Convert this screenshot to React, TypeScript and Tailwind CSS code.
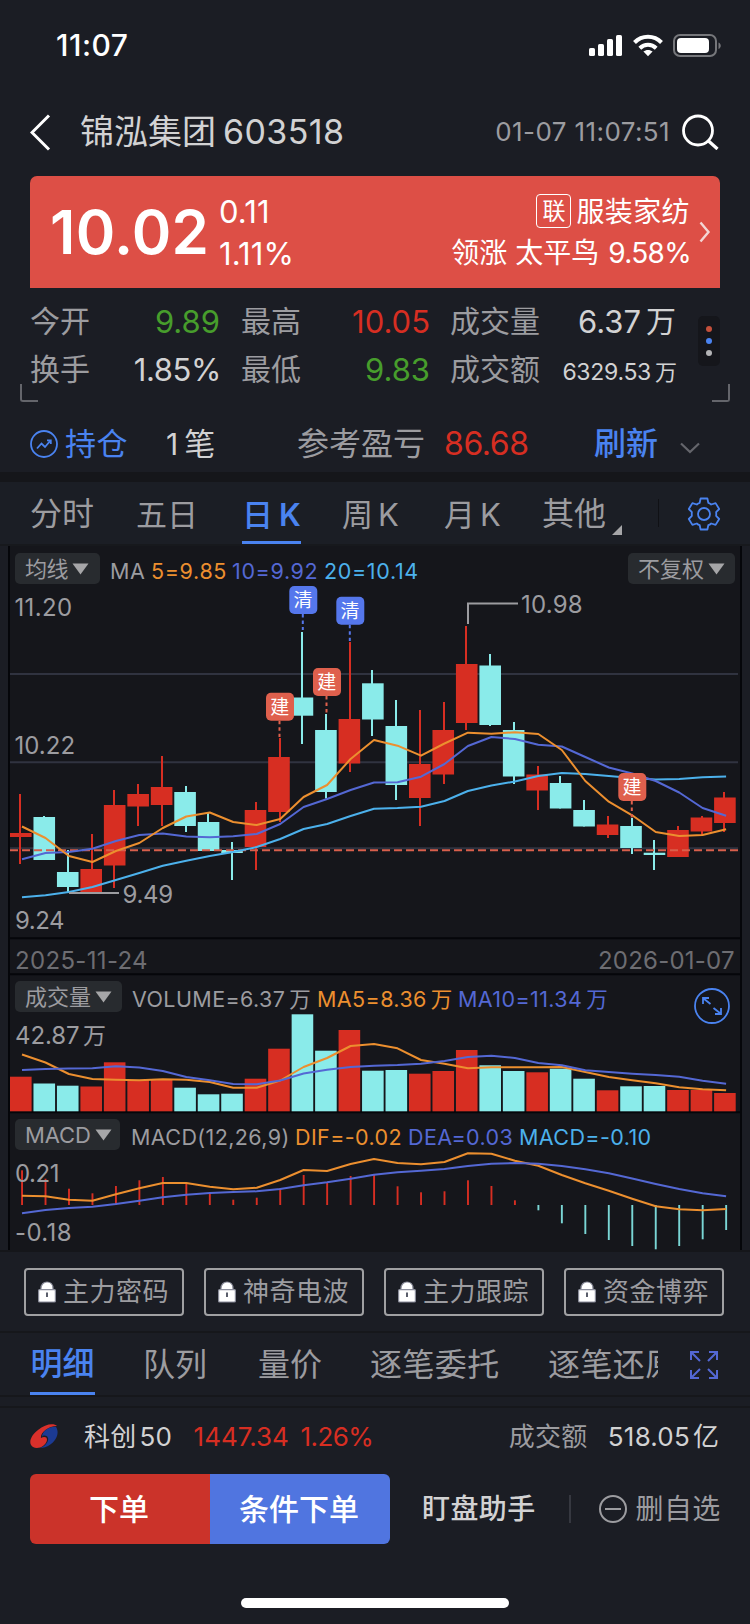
import React from 'react';

const RED = '#d72e22';
const CYAN = '#8aebea';
const ORANGE = '#ec8f2f';
const INDIGO = '#5468d4';
const SKY = '#4cb1ec';

// [up, high, bodyTop, bodyBottom, low]
const candles: [number, number, number, number, number][] = [
    [1, 794, 833, 837, 864],
    [0, 816, 817, 860, 860],
    [0, 850, 872, 887, 892],
    [1, 834, 869, 892, 892],
    [1, 790, 805, 865.5, 888],
    [1, 784, 794, 806.5, 826],
    [1, 756, 787, 805, 826],
    [0, 786, 792, 826, 832],
    [0, 813, 822, 851, 851],
    [0, 842, 850, 853, 880],
    [1, 802, 810, 847, 870],
    [1, 738, 757, 812, 822],
    [0, 632, 697.5, 715.7, 744],
    [0, 714, 730, 792, 798.5],
    [1, 642, 719, 763.5, 772],
    [0, 670, 683.3, 719.5, 736],
    [0, 700, 726, 785, 800],
    [1, 710, 764, 798, 826],
    [1, 702, 730, 774.5, 784],
    [1, 626, 664, 723, 730],
    [0, 654, 665.5, 725, 726],
    [0, 722, 730, 776.5, 784],
    [1, 766, 774.5, 790.5, 810],
    [0, 776, 783, 808.5, 808.5],
    [0, 800, 810, 826.5, 826.5],
    [1, 816, 824.5, 835, 838],
    [0, 818, 826, 848, 854],
    [0, 840, 852.7, 855, 870],
    [1, 826, 830, 857, 857],
    [1, 816, 817.5, 831.5, 836],
    [1, 792, 797.5, 823, 832],
];

const ma5 = [826.5, 838, 856, 862, 851, 843, 828, 816.5, 812.5, 822, 825, 819, 797, 785, 759, 740, 745.7, 755.7, 743.5, 732.7, 733.7, 732.3, 734, 750, 781, 801.7, 815.3, 832, 836, 835, 829.3];
const ma10 = [859.3, 853, 852, 848.7, 841, 835, 833.5, 836.5, 837.3, 836.3, 834, 824, 807, 799, 790, 782.5, 782.3, 776.7, 764, 746, 737, 739, 744.7, 746.5, 757, 767.5, 773.5, 781, 792.5, 808, 815.7];
const ma20 = [897.3, 895.3, 892, 887, 880, 873, 865.7, 860.7, 856, 852, 847, 839, 829, 824, 816, 808.7, 808, 806.7, 801, 791, 785.5, 781.5, 776, 773, 774, 776, 778, 779.5, 779, 777.3, 776.5];

const volTop = [1076.7, 1083.5, 1085.7, 1086.5, 1062.3, 1080, 1079, 1087.7, 1094.3, 1093.7, 1078.7, 1048.7, 1014.3, 1050.7, 1030, 1070.7, 1070, 1073.7, 1071, 1050, 1065.3, 1071, 1072.3, 1068.7, 1078.7, 1090.3, 1086.3, 1086, 1090, 1090, 1093];
const volMa5 = [1054.5, 1062.5, 1074, 1079, 1079.7, 1080.3, 1079.3, 1079.7, 1082, 1087.7, 1087.7, 1080.5, 1067, 1058, 1046, 1044, 1048.3, 1060, 1063.7, 1068.3, 1067.3, 1067.3, 1067.3, 1067, 1072, 1077, 1080.3, 1083.3, 1087.3, 1089.3, 1090.3];
const volMa10 = [1070, 1069, 1068.5, 1068.3, 1066.3, 1067.5, 1071, 1077, 1080.3, 1084, 1084.3, 1080.5, 1073.5, 1069.7, 1067, 1065.7, 1065, 1063.7, 1061, 1057, 1055.7, 1058, 1063, 1065.3, 1070.3, 1072, 1073.7, 1075, 1076.7, 1080.7, 1083.7];

const macdTip = [1170.3, 1178.7, 1188.7, 1193.3, 1186, 1180.3, 1177, 1183.7, 1193.7, 1199.7, 1197.7, 1188, 1175, 1182.7, 1176, 1175, 1186.3, 1192.3, 1191.3, 1180.3, 1186, 1200.3, 1210.3, 1223.3, 1234, 1240, 1246, 1249.3, 1246, 1239.3, 1230];
const dif = [1195.7, 1196.3, 1199.7, 1200.7, 1194.3, 1188.3, 1183, 1183, 1186.7, 1189.3, 1187.7, 1180, 1170, 1171, 1164, 1159, 1163, 1164.3, 1162, 1153.3, 1153.7, 1160.7, 1165.7, 1175, 1183.3, 1190.7, 1198.7, 1206.3, 1209.3, 1210.3, 1209];
const dea = [1213.3, 1210, 1208, 1206.7, 1204, 1200.7, 1197.3, 1194.7, 1193, 1192, 1191.3, 1189, 1185.3, 1182.3, 1178.7, 1174.7, 1172.3, 1170.7, 1169, 1166, 1163.7, 1163, 1163.7, 1166, 1169.3, 1173.3, 1178.5, 1184, 1189, 1193.3, 1196.3];

const px = (i: number) => 22 + i * 23.47;
const wickX = (i: number) => 2 * Math.floor((21.9 + i * 23.47) / 2);
const barX = (i: number) => 10 + i * 23.47;
const toPoints = (ys: number[]) => ys.map((y, i) => `${px(i).toFixed(1)},${y}`).join(' ');

const Line = ({ ys, color }: { ys: number[]; color: string }) => (
    <polyline points={toPoints(ys)} fill="none" stroke={color} strokeWidth="2" strokeLinejoin="round" />
);

const Label = ({ x, y, w, fill = '#9c9ca0', children }: { x: number; y: number; w: number; fill?: string; children: React.ReactNode }) => (
    <text x={x} y={y} textLength={w} fill={fill} fontSize="24">{children}</text>
);

const markers = [
    { x: 303.3, y: 600, end: 630, text: '清', color: '#5577ec' },
    { x: 350.3, y: 610.7, end: 641, text: '清', color: '#5577ec' },
    { x: 327, y: 682, end: 713, text: '建', color: '#df604d' },
    { x: 280, y: 706.7, end: 737, text: '建', color: '#df604d' },
    { x: 632.3, y: 787, end: 818, text: '建', color: '#df604d' },
];

const Chart = () => (
    <svg className="absolute inset-0" width="750" height="706" viewBox="0 546 750 706">
        {/* frame */}
        <rect x="10" y="546" width="730" height="704" fill="#15161b" />
        <path d="M9 546V1250M741 546V1250" stroke="#05060a" strokeWidth="2" />
        <path d="M10 938.3H740M10 974.3H740M10 1112.3H740" stroke="#05060a" strokeWidth="2" />
        <path d="M10 674H738M10 762.3H738M10 848.3H738" stroke="#303340" strokeWidth="2" />
        <path d="M0 1251H750" stroke="#15161a" strokeWidth="2" />

        {/* candles */}
        {candles.map(([up, high, top, bottom, low], i) => (
            <g key={i} fill={up ? RED : CYAN}>
                <rect x={wickX(i) - 1} y={high} width="2" height={low - high} />
                <rect x={barX(i)} y={top} width="21.6" height={bottom - top} />
            </g>
        ))}
        <path d="M10 850.2H738" stroke="#d85f4c" strokeWidth="2" strokeDasharray="8 4" />
        <Line ys={ma20} color={SKY} />
        <Line ys={ma10} color={INDIGO} />
        <Line ys={ma5} color={ORANGE} />

        <path d="M468 624V603.5H518M69 893H119" fill="none" stroke="#9c9ca0" strokeWidth="2" />
        <Label x={14.5} y={616} w={58}>11.20</Label>
        <Label x={14.5} y={754} w={61}>10.22</Label>
        <Label x={15} y={929} w={50}>9.24</Label>
        <Label x={122.5} y={903} w={51}>9.49</Label>
        <Label x={521} y={613} w={62}>10.98</Label>
        <Label x={15} y={969} w={133}>{<tspan fill="#6d6d72">2025-11-24</tspan>}</Label>
        <Label x={598} y={969} w={137} fill="#6d6d72">2026-01-07</Label>

        {markers.map((m, i) => (
            <g key={i}>
                <path d={`M${m.x - 0.5} ${m.y + 14}V${m.end}`} stroke={m.color} strokeWidth="2" strokeDasharray="3.5 3" />
                <rect x={m.x - 14} y={m.y - 14} width="28" height="28" rx="5" fill={m.color} />
                <text x={m.x} y={m.y + 7} textAnchor="middle" fontSize="19" fill="#fff">{m.text}</text>
            </g>
        ))}

        {/* volume */}
        {volTop.map((y, i) => (
            <rect key={i} x={barX(i)} y={y} width="21.6" height={1111.3 - y} fill={candles[i][0] ? RED : CYAN} />
        ))}
        <Line ys={volMa5} color={ORANGE} />
        <Line ys={volMa10} color={INDIGO} />
        <Label x={15} y={1043.5} w={65}>42.87</Label>
        <text x="83" y="1044" fontSize="23" fill="#9c9ca0">万</text>

        {/* macd */}
        {macdTip.map((y, i) => (
            <rect key={i} x={px(i) - 0.9} y={Math.min(y, 1205)} width="1.9" height={Math.abs(y - 1205)} fill={y < 1205 ? RED : '#7ad6d5'} />
        ))}
        <Line ys={dif} color={ORANGE} />
        <Line ys={dea} color={INDIGO} />
        <Label x={15} y={1181.5} w={45}>0.21</Label>
        <Label x={15} y={1241} w={57}>-0.18</Label>
    </svg>
);

const Pill = ({ children, className }: { children: React.ReactNode; className: string }) => (
    <div className={`h-[31px] rounded-[5px] bg-[#282b2f] flex items-center pl-[10px] gap-[4px] text-[22px] text-[#9c9ca0] shrink-0 ${className}`}>
        <span>{children}</span>
        <svg width="17" height="12" viewBox="0 0 17 12"><path d="M0.5 0.5H16.5L8.5 11.5Z" fill="#a6a6a8" /></svg>
    </div>
);

const Lock = () => (
    <svg width="18" height="22" viewBox="0 0 18 22" className="shrink-0">
        <path d="M3 9V7.5C3 3.5 5.5 1 9 1S15 3.5 15 7.5V9Z" fill="#fff" stroke="#8b8d9b" strokeWidth="1.2" />
        <rect x="0.6" y="8.6" width="16.8" height="12.4" rx="1" fill="#fff" stroke="#8b8d9b" strokeWidth="1.2" />
        <path d="M9 11.5V16" stroke="#5b5e6b" strokeWidth="2" />
    </svg>
);

const App: React.FC = () => {
    return (
        <div className="w-[750px] h-[1624px] bg-[#1b1d24] flex flex-col overflow-hidden whitespace-nowrap text-[#9c9ca0] leading-none font-['Inter','Noto_Sans_CJK_SC',sans-serif]">
            {/* status bar */}
            <div className="h-[92px] flex items-center justify-between pl-[56px] pr-[28px] text-white">
                <span className="-mt-[2px] text-[30px] font-medium tracking-[0.5px]">11:07</span>
                <svg width="134" height="24" viewBox="0 0 134 24" fill="#fff">
                    <rect x="1" y="14" width="6" height="8" rx="1.6" />
                    <rect x="10" y="10" width="6" height="12" rx="1.6" />
                    <rect x="19" y="5" width="6" height="17" rx="1.6" />
                    <rect x="28" y="1" width="6" height="21" rx="1.6" />
                    <g fill="none" stroke="#fff" strokeWidth="4">
                        <path d="M46.5 8.5C54 0.8 66 0.8 73.5 8.5" />
                        <path d="M51.8 14.2C56.5 9.6 63.5 9.6 68.2 14.2" />
                    </g>
                    <path d="M60 22.3L55.4 17.6C58 15.3 62 15.3 64.6 17.6Z" />
                    <rect x="86" y="1" width="42" height="21" rx="6" fill="none" stroke="#76777b" strokeWidth="2" />
                    <rect x="89" y="4" width="32" height="15" rx="4" />
                    <path d="M130.5 8.5C133.5 9.8 133.5 13.7 130.5 15Z" fill="#76777b" />
                </svg>
            </div>

            {/* title */}
            <div className="h-[84px] pb-[4px] flex items-center pl-[30px] pr-[31px] text-[#d2d2d3]">
                <svg width="21" height="37" viewBox="0 0 21 37" className="shrink-0"><path d="M19 1.5L2 18.5L19 35.5" fill="none" stroke="#fff" strokeWidth="3" /></svg>
                <span className="ml-[29px] text-[34px]">锦泓集团</span>
                <span className="ml-[7px] text-[34px] tracking-[0.4px]">603518</span>
                <span className="ml-auto text-[26px] text-[#9c9ca0] tracking-[0.4px]">01-07 11:07:51</span>
                <svg width="38" height="36" viewBox="0 0 38 36" className="ml-[11px] shrink-0">
                    <circle cx="17" cy="16.5" r="14.5" fill="none" stroke="#fff" strokeWidth="2.8" />
                    <path d="M27 26.5L36.5 35" stroke="#fff" strokeWidth="3.2" />
                </svg>
            </div>

            {/* price card */}
            <div className="h-[112px] mx-[30px] rounded-t-[7px] bg-[#dd4f46] text-white flex items-center">
                <span className="w-[189px] pl-[20px] text-[60px] font-semibold tracking-[0.3px]">10.02</span>
                <div className="flex flex-col h-[84px] text-[31px] tracking-[0.1px]">
                    <span className="h-[42px] flex items-center">0.11</span>
                    <span className="h-[42px] flex items-center">1.11%</span>
                </div>
                <div className="ml-auto pt-[2px] flex flex-col h-[84px] items-end text-[28px]">
                    <div className="h-[41px] flex items-center">
                        <span className="w-[35px] h-[34px] mb-[2px] border rounded-[4px] flex items-center justify-center text-[23px] mr-[5px]">联</span>
                        <span className="tracking-[0.4px]">服装家纺</span>
                    </div>
                    <div className="h-[42px] flex items-center">
                        <span>领涨</span>
                        <span className="ml-[8px]">太平鸟</span>
                        <span className="ml-[9px] -mr-[1px] tracking-[-0.7px]">9.58%</span>
                    </div>
                </div>
                <svg width="12" height="22" viewBox="0 0 12 22" className="ml-[9px] mr-[9px] shrink-0"><path d="M1.5 1.5L9.5 11L1.5 20.5" fill="none" stroke="#f3d6d4" strokeWidth="2.4" /></svg>
            </div>

            {/* quote stats */}
            <div className="h-[114px] pt-[9px] px-[20px] flex flex-col relative text-[30px]">
                <div className="h-[48px] pl-[10px] flex items-center">
                    <span className="w-[60px]">今开</span>
                    <span className="w-[130px] text-right text-[31px] text-[#479d2c]">9.89</span>
                    <span className="w-[60px] ml-[21px]">最高</span>
                    <span className="w-[129px] text-right text-[31px] text-[#d72e22]">10.05</span>
                    <span className="w-[90px] ml-[20px]">成交量</span>
                    <span className="w-[136px] flex items-center justify-end gap-[5px] text-[#d2d2d3]"><span className="text-[31px]">6.37</span><span>万</span></span>
                </div>
                <div className="h-[48px] pl-[10px] flex items-center">
                    <span className="w-[60px]">换手</span>
                    <span className="w-[131px] text-right text-[#d2d2d3] text-[31px] tracking-[-0.4px]">1.85%</span>
                    <span className="w-[60px] ml-[20px]">最低</span>
                    <span className="w-[129px] text-right text-[31px] text-[#479d2c]">9.83</span>
                    <span className="w-[90px] ml-[20px]">成交额</span>
                    <span className="w-[137px] pt-[6px] flex items-center justify-end gap-[4px] text-[#d2d2d3]"><span className="text-[23px] tracking-[-0.3px]">6329.53</span><span className="text-[22px]">万</span></span>
                </div>
                <svg width="22" height="50" viewBox="0 0 22 50" className="absolute left-[698px] top-[28px]">
                    <rect width="22" height="50" rx="5" fill="#15161b" />
                    <circle cx="11" cy="13" r="3" fill="#c4503b" />
                    <circle cx="11" cy="25" r="3" fill="#4a83f0" />
                    <circle cx="11" cy="37" r="3" fill="#b4b4b6" />
                </svg>
                <div className="absolute left-[20px] bottom-0 w-[18px] h-[18px] border-l-2 border-b-2 rounded-bl-[3px] border-[#64656b]" />
                <div className="absolute right-[20px] bottom-0 w-[18px] h-[18px] border-r-2 border-b-2 rounded-br-[3px] border-[#64656b]" />
            </div>

            {/* position */}
            <div className="h-[70px] pl-[30px] pb-[1px] pt-[14px] flex items-center text-[31px]">
                <svg width="28" height="28" viewBox="0 0 28 28" fill="none" stroke="#4a83f0" strokeWidth="1.8" className="shrink-0">
                    <circle cx="14" cy="14" r="13" />
                    <path d="M7 18.5L11.5 13.5L15 17L20.5 10.5M17 10.3H20.8V14" />
                </svg>
                <span className="ml-[7px] w-[101px] text-[#4a83f0] tracking-[0.6px]">持仓</span>
                <span className="w-[131px] flex items-center gap-[6px] text-[#d2d2d3]"><span className="text-[30px]">1</span><span>笔</span></span>
                <span className="w-[147px] text-[32px]">参考盈亏</span>
                <span className="w-[150px] text-[#d72e22] text-[32px] tracking-[-0.4px]">86.68</span>
                <span className="w-[86px] text-[32px] text-[#4a83f0] font-medium">刷新</span>
                <svg width="20" height="12" viewBox="0 0 20 12" className="mt-[8px]"><path d="M1 1.5L10 10L19 1.5" fill="none" stroke="#64656b" strokeWidth="2.2" /></svg>
            </div>
            <div className="h-[10px] bg-[#15161a]" />

            {/* period tabs */}
            <div className="h-[64px] pl-[30px] flex items-center text-[32px] bg-[#1b1e25] border-b-2 border-[#17191d]">
                <span className="w-[106px] pt-[2px]">分时</span>
                <span className="w-[106px] pt-[2px] text-[31px]">五日</span>
                <div className="w-[59px] h-full pt-[5px] flex items-center justify-center gap-[6px] border-b-[3px] border-[#4a83f0] text-[#4a83f0] text-[31px] font-medium"><span>日</span><span className="font-semibold">K</span></div>
                <div className="w-[102px] ml-[41px] pt-[2px] flex items-center gap-[5px] text-[31px]"><span>周</span><span>K</span></div>
                <div className="w-[98px] pt-[2px] flex items-center gap-[5px] text-[31px]"><span>月</span><span>K</span></div>
                <span className="w-[69px] pt-[2px]">其他</span>
                <svg width="10" height="10" viewBox="0 0 10 10" className="mt-[34px] ml-px"><path d="M10 0V10H0Z" fill="#a6a6a8" /></svg>
                <div className="w-px h-[28px] ml-[36px] bg-[#101115]" />
                <svg width="34" height="34" viewBox="0 0 34 34" fill="none" stroke="#4a83f0" strokeWidth="1.8" strokeLinejoin="round" className="ml-[28px] mt-[2px]">
                    <circle cx="17" cy="17" r="6" />
                    <path d="M13.6 1.5H20.4L21.3 5.8Q22.8 6.3 24.2 7.5L28.6 6.1L32.2 12L29.1 15.2Q29.4 17 29.1 18.8L32.2 22L28.6 27.9L24.2 26.5Q22.8 27.7 21.3 28.2L20.4 32.5H13.6L12.7 28.2Q11.2 27.7 9.8 26.5L5.4 27.9L1.8 22L4.9 18.8Q4.6 17 4.9 15.2L1.8 12L5.4 6.1L9.8 7.5Q11.2 6.3 12.7 5.8Z" />
                </svg>
            </div>

            {/* charts, with their indicator bars laid over */}
            <div className="h-[706px] relative flex flex-col text-[21.5px] tracking-[0.4px]">
                <Chart />
                <div className="relative mt-[7px] h-[31px] px-[15px] flex items-center">
                    <Pill className="w-[85px] tracking-[-0.4px]">均线</Pill>
                    <div className="flex pt-[7px] pl-[10px] tracking-[0.65px]">
                        <span className="w-[41px]">MA</span>
                        <span className="w-[81px] text-[#ec8f2f]">5=9.85</span>
                        <span className="w-[92px] text-[#5468d4]">10=9.92</span>
                        <span className="text-[#4cb1ec]">20=10.14</span>
                    </div>
                    <Pill className="w-[107px] ml-auto tracking-[0px]">不复权</Pill>
                </div>
                <div className="relative mt-[397px] h-[31px] px-[15px] flex items-center">
                    <Pill className="w-[107px] tracking-[0px]">成交量</Pill>
                    <div className="flex pt-[6px] pl-[10px]">
                        <span className="w-[185px] flex items-center gap-[4px]"><span>VOLUME=6.37</span><span>万</span></span>
                        <span className="w-[141px] flex items-center gap-[4px] text-[#ec8f2f]"><span>MA5=8.36</span><span>万</span></span>
                        <span className="flex items-center gap-[4px] text-[#5468d4]"><span>MA10=11.34</span><span>万</span></span>
                    </div>
                    <svg width="36" height="36" viewBox="0 0 36 36" fill="none" stroke="#4a83f0" strokeWidth="1.8" className="ml-auto mr-[5px] mt-[18px]">
                        <circle cx="18" cy="18" r="17" />
                        <path d="M9 16V10H15M9.5 10.5L16.5 16M27 20V26H21M26.5 25.5L19.5 20" />
                    </svg>
                </div>
                <div className="relative mt-[107px] h-[31px] px-[15px] flex items-center">
                    <Pill className="w-[105px] tracking-[-0.1px]">MACD</Pill>
                    <div className="flex pt-[7px] pl-[11px]">
                        <span className="w-[164px]">MACD(12,26,9)</span>
                        <span className="w-[113px] text-[#ec8f2f]">DIF=-0.02</span>
                        <span className="w-[111px] text-[#5468d4]">DEA=0.03</span>
                        <span className="text-[#4cb1ec]">MACD=-0.10</span>
                    </div>
                </div>
            </div>

            {/* premium indicators */}
            <div className="h-[81px] pl-[24px] flex items-center gap-[20px] text-[26px] border-b-2 border-[#16171b]">
                {['主力密码', '神奇电波', '主力跟踪', '资金博弈'].map((name) => (
                    <div key={name} className="w-[160px] h-[48px] border-2 border-[#a0a0a2] rounded-[4px] flex items-center pl-[12px] gap-[7px]">
                        <Lock />
                        <span className="pt-px tracking-[0.5px]">{name}</span>
                    </div>
                ))}
            </div>

            {/* detail tabs */}
            <div className="h-[64px] pl-[30px] flex items-center text-[32px] border-b-2 border-[#16171b]">
                <div className="w-[65px] h-full pt-[3px] flex items-center justify-center border-b-[3px] border-[#4a83f0] text-[#4a83f0] font-medium">明细</div>
                <span className="ml-[48px] pt-[2px] w-[115px]">队列</span>
                <span className="w-[112px] pt-[2px]">量价</span>
                <span className="w-[178px] pt-[2px] tracking-[0.4px]">逐笔委托</span>
                <span className="w-[110px] overflow-hidden pt-[10px] pb-2 tracking-[0.4px]">逐笔还原</span>
                <svg width="28" height="28" viewBox="0 0 28 28" fill="none" stroke="#5468d4" strokeWidth="2" className="ml-[32px] mt-[2px]">
                    <path d="M1 9V1H9M1 1L10 10M19 1H27V9M27 1L18 10M1 19V27H9M1 27L10 18M19 27H27V19M27 27L18 18" />
                </svg>
            </div>
            <div className="h-[11px] border-b-2 border-[#16171b]" />

            {/* index */}
            <div className="h-[57px] pl-[30px] pr-[31px] flex items-center text-[26px]">
                <svg width="28" height="26" viewBox="0 0 28 26" className="-mt-[2px] shrink-0">
                    <path d="M27 3C24 0 15 1 8 7C0 13 -2 21 3 24C8 27 16 23 17 17C17 13 13 14 11 15C10 10 18 3 27 3Z" fill="#d9302b" />
                    <path d="M26 4C29 8 28 16 21 21C17 24 13 25 10 25C15 23 19 19 18 15C17 12 13 12 12 14C12 8 20 3 26 4Z" fill="#1c3a93" />
                </svg>
                <span className="ml-[26px] text-[#d2d2d3] tracking-[0.3px]">科创</span>
                <span className="ml-[3px] w-[54px] text-[#d2d2d3]">50</span>
                <span className="w-[107px] text-[#d72e22]">1447.34</span>
                <span className="text-[#d72e22] tracking-[-0.6px]">1.26%</span>
                <span className="ml-auto w-[99px] tracking-[0.2px]">成交额</span>
                <span className="flex items-center gap-[3px] text-[#d2d2d3]"><span className="tracking-[0.2px]">518.05</span><span>亿</span></span>
            </div>

            {/* actions */}
            <div className="mt-[9px] h-[70px] pl-[30px] flex items-center text-[28px]">
                <button className="w-[180px] h-full pr-[2px] rounded-l-[6px] bg-[#cb332a] text-white text-[30px] font-medium">下单</button>
                <button className="w-[180px] h-full pr-[2px] rounded-r-[6px] bg-[#5075e0] text-white text-[30px] font-medium">条件下单</button>
                <span className="ml-[32px] text-[#d2d2d3] font-medium tracking-[0.4px]">盯盘助手</span>
                <div className="ml-[33px] w-[2px] h-[28px] bg-[#363840]" />
                <svg width="28" height="28" viewBox="0 0 28 28" fill="none" stroke="#9c9ca0" strokeWidth="2" className="ml-[28px]">
                    <circle cx="14" cy="14" r="13" />
                    <path d="M6 14H22" />
                </svg>
                <span className="ml-[9px] tracking-[0.3px]">删自选</span>
            </div>

            {/* home indicator */}
            <div className="mt-[54px] mx-auto w-[268px] h-[10px] rounded-full bg-white shrink-0" />
        </div>
    );
};

export default App;
